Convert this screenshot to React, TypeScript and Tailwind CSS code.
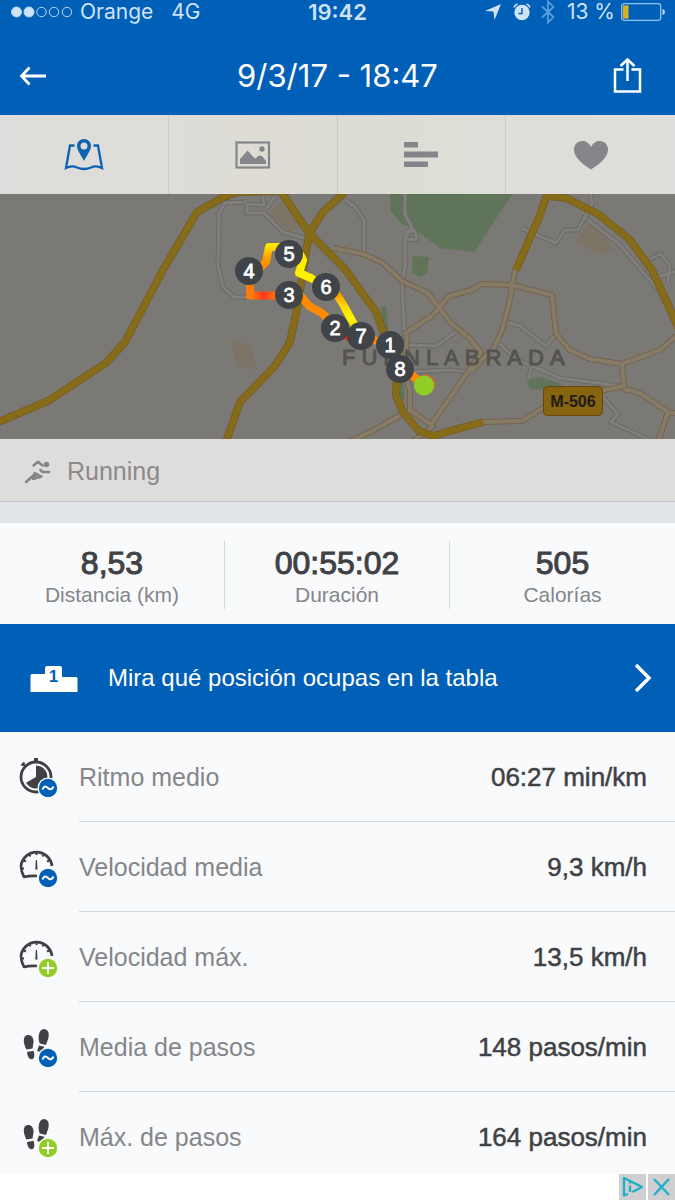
import type { ReactNode } from 'react';

// Splits on the route, in the order they are stacked on the map
const PINS = [
  { label: '5', x: 289, y: 60 },
  { label: '4', x: 249, y: 77 },
  { label: '3', x: 289, y: 101 },
  { label: '6', x: 326, y: 93 },
  { label: '2', x: 335, y: 134 },
  { label: '7', x: 361, y: 142 },
  { label: '1', x: 390, y: 151 },
  { label: '8', x: 400, y: 175 },
];

const MAJOR_ROADS = [
  'M-4 229 L48 207 L106 169 L125 148 L163 76 L197 18 L222 4 L236 -2 L290 -3',
  'M281 -2 L309 39 L345 75 L376 118 L388 150 L397 180 L396 201 L403 218 L419 237 L433 242 L450 237 L483 228',
  'M345 -2 L323 18 L309 40 L297 115 L290 148 L275 172 L240 208 L226 248',
  'M548 -2 L540 21 L516 76',
  'M548 2 L566 4 L598 20 L629 45 L652 76 L670 115 L680 138',
];

const MINOR_ROADS = [
  'M333 54 L363 60 L383 69 L402 87 L428 99 L450 128 L470 145 L481 158 L470 175 L430 232',
  'M404 140 L432 122 L449 102 L472 96 L481 90 L512 91 L552 101 L556 140 L570 156 L590 165 L622 170 L660 156 L680 139',
  'M515 76 L509 110 L502 136 L494 154 L470 178',
  'M622 170 L624 192 L600 197 L560 205 L538 217 L522 227 L483 228',
  'M624 195 L640 199 L668 218 L680 220',
  'M668 218 L658 248',
  'M349 248 L372 237 L410 216 L410 197 L405 180 L407 140',
  'M410 216 L433 232 L412 248',
];

const STREETS = [
  'M262 -2 L264 11 L247 10 L247 19 L264 19 L283 38 L304 44',
  'M247 8 L225 9 L219 20 L218 72 L223 93 L234 103 L249 103',
  'M278 -2 L267 14',
  'M345 6 L355 13 L364 26 L364 64',
  'M405 -2 L405 20 L412 34 L405 44 L405 72 L402 90 L405 150',
  'M405 38 L415 37 L417 45 L404 46',
  'M407 151 L436 152 L456 138',
  'M410 178 L450 176 L470 178',
  'M506 128 L520 132 L546 152 L556 140',
  'M500 150 L515 165 L560 184 L620 192',
  'M523 35 L539 42 L556 49 L565 36 L578 36 L585 23 L592 10 L590 -2',
  'M587 25 L620 51 L660 98 L680 138',
  'M650 65 L661 60 L670 72 L668 88 M661 82 L680 76',
  'M604 204 L618 220 L611 228 L650 246',
  'M529 184 L532 170',
];

type BadgeKind = 'avg' | 'max';

function Badge({ kind }: { kind: BadgeKind }) {
  return (
    <>
      <circle cx="29" cy="31" r="10.5" fill="#f9fafc" />
      <circle cx="29" cy="31" r="9.2" fill={kind === 'avg' ? '#0060b6' : '#8fce24'} />
      <path
        d={kind === 'avg' ? 'M23.5 32.5 C25 28.5 27 29 29 31 S33 33 34.5 29.5' : 'M29 25 V37 M23 31 H35'}
        fill="none"
        stroke="#fff"
        strokeWidth="2"
      />
    </>
  );
}

function StatIcon({ children, kind }: { children: ReactNode; kind: BadgeKind }) {
  return (
    <svg className="h-10 w-10 shrink-0" viewBox="0 0 40 40" aria-hidden="true">
      {children}
      <Badge kind={kind} />
    </svg>
  );
}

const stopwatch = (
  <>
    <circle cx="17" cy="20" r="15" fill="none" stroke="#3f4144" strokeWidth="2.8" />
    <path d="M17 8.5 A11.5 11.5 0 1 1 7 25.8 L17 20 Z" fill="#3f4144" />
    <path d="M15 1 H19 V5 H15 Z" fill="#3f4144" />
    <path d="M2.5 8.5 L5.5 5.5 M4 7 L7 10" stroke="#3f4144" strokeWidth="2.2" />
  </>
);

const gauge = (
  <>
    <path
      d="M33 19 A15.6 15.6 0 0 0 2 19 Q2 24 5 30 Q11 28.500 18 29"
      fill="none"
      stroke="#3f4144"
      strokeWidth="2.7"
      strokeLinejoin="round"
    />
    <path
      d="M17.500 4 V8 M9.500 6.500 L11.500 9.500 M25.500 6.500 L23.500 9.500 M4 13 L7 14.500 M31 13 L28 14.500 M2 21.500 H5"
      stroke="#3f4144"
      strokeWidth="2"
    />
    <path d="M16.800 13 H18 L18.500 22.500 H16.300 Z" fill="#3f4144" />
  </>
);

const footsteps = (
  <g fill="#3f4144">
    <path d="M8.5 8 C13 7 15.5 12.500 14.300 16.500 L13.500 21.500 L7.500 22.500 C5 18 2.500 9.500 8.500 8 Z" />
    <path d="M8 25 L14.500 23.700 C15.500 27 16 31 13.500 32 C10.500 33 8.500 30 8 25 Z" />
    <path d="M25 2 C31 2.300 30.500 10 28 15 L27 18 L20.800 16.500 C18.500 11 19.500 2.300 25 2 Z" />
    <path d="M20 18.500 L25.500 19.800 L22 25 L18 24 Z" />
  </g>
);

const STATS: { label: string; value: string; kind: BadgeKind; icon: ReactNode }[] = [
  { label: 'Ritmo medio', value: '06:27 min/km', kind: 'avg', icon: stopwatch },
  { label: 'Velocidad media', value: '9,3 km/h', kind: 'avg', icon: gauge },
  { label: 'Velocidad máx.', value: '13,5 km/h', kind: 'max', icon: gauge },
  { label: 'Media de pasos', value: '148 pasos/min', kind: 'avg', icon: footsteps },
  { label: 'Máx. de pasos', value: '164 pasos/min', kind: 'max', icon: footsteps },
];

const TOTALS = [
  { value: '8,53', label: 'Distancia (km)' },
  { value: '00:55:02', label: 'Duración' },
  { value: '505', label: 'Calorías' },
];

const TABS = [
  {
    label: 'Mapa',
    icon: (
      <svg className="h-8 w-10" viewBox="0 0 40 32" fill="none">
        <path
          d="M10.5 6.5 H6 L2 29 Q8 26 13 28.500 Q20 31.500 27 28.500 Q32 26 38 29 L34 6.500 H29.500"
          stroke="#0d62b4"
          strokeWidth="2.3"
        />
        <path
          d="M20 0 C16 0 13 3 13 7 C13 11 17 16 20 22 C23 16 27 11 27 7 C27 3 24 0 20 0 Z M20 3.5 A3.5 3.5 0 1 1 20 10.500 A3.5 3.5 0 1 1 20 3.500 Z"
          fill="#0d62b4"
          fillRule="evenodd"
        />
      </svg>
    ),
  },
  {
    label: 'Fotos',
    icon: (
      <svg className="h-7 w-9" viewBox="0 0 36 28">
        <rect x="1.500" y="1.500" width="32.500" height="25" fill="none" stroke="#858689" strokeWidth="2.200" />
        <path d="M5 23 V18 L12.500 9.500 L18 15.500 L20 17.500 L24 14.500 L27 15 L31 20 V23 Z" fill="#858689" />
        <circle cx="27" cy="8" r="2.700" fill="#858689" />
      </svg>
    ),
  },
  {
    label: 'Parciales',
    icon: (
      <svg className="h-[25px] w-9" viewBox="0 0 36 25" fill="#858689">
        <path d="M1 0 H15 V5.500 H1 Z M1 9.500 H35 V15.500 H1 Z M1 19.500 H25 V25 H1 Z" />
      </svg>
    ),
  },
  {
    label: 'Pulso',
    icon: (
      <svg className="h-[30px] w-9" viewBox="0 0 36 30" fill="#858689">
        <path d="M18 29.500 C13 26 1 19 1 9.500 C1 1 13 -3 18 7 C23 -3 35 1 35 9.500 C35 19 23 26 18 29.500 Z" />
      </svg>
    ),
  },
];

function StatusBar() {
  return (
    <div className="grid h-6 grid-cols-[1fr_auto_1fr] items-center px-2.5 font-[Inter,sans-serif] text-[21px] leading-6 text-[#cfe3f8]">
      <div className="flex items-center">
        <svg className="h-3 w-16" viewBox="0 0 64 12" fill="none" stroke="#b8d6f4">
          <circle cx="6.500" cy="6" r="5" fill="#cfe3f8" />
          <circle cx="19" cy="6" r="5" fill="#cfe3f8" />
          <circle cx="31.500" cy="6" r="4.700" />
          <circle cx="44" cy="6" r="4.700" />
          <circle cx="57" cy="6" r="4.700" />
        </svg>
        <span className="ml-1.5">Orange</span>
        <span className="ml-[18px]">4G</span>
      </div>
      <span className="text-[22px] font-semibold">19:42</span>
      <div className="flex items-center justify-end">
        <svg className="mr-3 h-4 w-4" viewBox="0 0 16 16" fill="#cfe3f8">
          <path d="M16 0 L9.500 16 L8.500 7.500 L0 7 Z" />
        </svg>
        <svg className="mr-2.5 h-[18px] w-[18px]" viewBox="0 0 18 18" fill="none">
          <circle cx="9" cy="9.500" r="7.700" fill="#cfe3f8" />
          <path d="M1 4.500 A6 6 0 0 1 4.500 1 M13.500 1 A6 6 0 0 1 17 4.500" stroke="#cfe3f8" strokeWidth="1.600" />
          <path d="M9 5 V10.500 H5.500" stroke="#0060b7" strokeWidth="1.400" />
        </svg>
        <svg className="mr-3 h-6 w-[14px]" viewBox="0 0 14 24" fill="none" stroke="#5d9fdd" strokeWidth="1.700">
          <path d="M1 6.500 L12.500 17 L7 22.500 V1.500 L12.500 7 L1 17.500" />
        </svg>
        <span>13 %</span>
        <svg className="ml-1.5 h-[18px] w-11" viewBox="0 0 44 18" fill="none">
          <rect x="0.700" y="0.700" width="39" height="16.600" rx="2.500" stroke="#8fc0ec" strokeWidth="1.300" />
          <rect x="2" y="2.500" width="5.500" height="13" fill="#d9b11e" />
          <path d="M41.500 6 Q44 6.500 44 9 T41.500 12 Z" fill="#b8d6f4" />
        </svg>
      </div>
    </div>
  );
}

function RouteMap() {
  return (
    <svg
      className="block h-[245px] w-full bg-[#7b7975]"
      viewBox="0 0 675 245"
      preserveAspectRatio="xMidYMid slice"
      role="img"
      aria-label="Fuenlabrada"
    >
      <defs>
        <linearGradient id="west" x1="249" y1="0" x2="281" y2="0" gradientUnits="userSpaceOnUse">
          <stop offset="0" stopColor="#ff8a00" />
          <stop offset="0.45" stopColor="#ff3a1c" />
          <stop offset="1" stopColor="#ff8a00" />
        </linearGradient>
        <linearGradient id="north" x1="0" y1="52" x2="0" y2="75" gradientUnits="userSpaceOnUse">
          <stop offset="0" stopColor="#ffe600" />
          <stop offset="0.5" stopColor="#ff9c00" />
          <stop offset="1" stopColor="#ff8a00" />
        </linearGradient>
        <linearGradient id="east" x1="0" y1="100" x2="0" y2="136" gradientUnits="userSpaceOnUse">
          <stop offset="0" stopColor="#ff9c00" />
          <stop offset="0.4" stopColor="#ffe100" />
          <stop offset="0.7" stopColor="#fff600" />
          <stop offset="1" stopColor="#ffc000" />
        </linearGradient>
      </defs>

      {/* Parks and fields */}
      <g fill="#5f7458">
        <path d="M390 -1 H513 L474 58 L440 54 L420 39 L402 30 L391 18 Z" />
        <path d="M413 62 L429 63 L427 80 L419 83 L412 79 Z" />
        <path d="M381 113 L386 112 L389 140 L383 140 Z" />
        <path d="M526 187 L540 183 L562 190 L558 196 L530 195 Z" />
        <path d="M397 186 L403 182 L405 205 L400 206 Z" />
      </g>
      <g fill="#7c7466">
        <path d="M231 145 L250 151 L257 176 L237 172 Z" />
        <path d="M575 48 L590 29 L606 42 L614 56 L600 61 Z" />
        <path d="M268 20 L285 2 L302 34 L290 38 Z" />
      </g>

      <g fill="none" strokeLinejoin="round">
        {STREETS.map((d) => (
          <path key={d} d={d} stroke="#6b6a67" strokeWidth="5" />
        ))}
        {STREETS.map((d) => (
          <path key={d} d={d} stroke="#817f7c" strokeWidth="3" />
        ))}
        {MINOR_ROADS.map((d) => (
          <path key={d} d={d} stroke="#75644e" strokeWidth="6" />
        ))}
        {MINOR_ROADS.map((d) => (
          <path key={d} d={d} stroke="#857b67" strokeWidth="4" />
        ))}
        {MAJOR_ROADS.map((d) => (
          <path key={d} d={d} stroke="#77602c" strokeWidth="8" />
        ))}
        {MAJOR_ROADS.map((d) => (
          <path key={d} d={d} stroke="#866c18" strokeWidth="6" />
        ))}
      </g>

      <text x="342" y="171" className="font-['Liberation_Sans',sans-serif] text-[22px] tracking-[6px]" fill="#545351" stroke="#545351">
        FUENLABRADA
      </text>

      <rect x="543.500" y="192.500" width="59" height="29" rx="4" fill="#876410" stroke="#69460b" />
      <text
        x="573"
        y="213"
        textAnchor="middle"
        className="font-['Liberation_Sans',sans-serif] text-[16px] font-bold"
        fill="#1f1c14"
      >
        M-506
      </text>

      {/* Recorded track, coloured by pace */}
      <g fill="none" strokeWidth="8" strokeLinejoin="round">
        <path d="M424 192 L400 170 L390 151 L361 142" stroke="#ff8a00" />
        <path d="M335 134 L361 151" stroke="#f51f1f" />
        <path d="M340 138 L322 119 L309 112 L300 101 L289 101" stroke="#ff8a00" />
        <path d="M281 101.500 H249.500" stroke="url(#west)" />
        <path d="M250 105 V77" stroke="#ff7a0a" />
        <path d="M258 76 L266 68 L269 53 H282" stroke="url(#north)" />
        <path d="M300 60 L303 66 L299 79 L311 84 L320 90" stroke="#fff000" />
        <path d="M334 96 L344 112 L357 136" stroke="url(#east)" />
      </g>
      <circle cx="425.500" cy="190.500" r="10" fill="#c76a36" />
      <circle cx="424" cy="191.500" r="10" fill="#8fce24" />

      {PINS.map((pin) => (
        <g key={pin.label}>
          <circle cx={pin.x} cy={pin.y} r="14" fill="#404448" />
          <text
            x={pin.x}
            y={pin.y + 7}
            textAnchor="middle"
            className="font-['Liberation_Sans',sans-serif] text-[20px]"
            fill="#fff"
            stroke="#fff"
            strokeWidth="0.8"
          >
            {pin.label}
          </text>
        </g>
      ))}
    </svg>
  );
}

export default function App() {
  return (
    <div className="min-h-screen bg-[#f9fafc] font-['Liberation_Sans',Arial,sans-serif] text-[#3f4144]">
      <header className="bg-[#0060b7]">
        <StatusBar />
        <div className="grid h-[91px] grid-cols-[1fr_auto_1fr] items-center px-[18px] pt-3 text-white">
          <button type="button" aria-label="Atrás" className="justify-self-start">
            <svg className="h-7 w-8" viewBox="0 0 32 28" fill="none" stroke="currentColor" strokeWidth="2.8">
              <path d="M28 14 H4 M11.500 5.500 L3.500 14 L11.500 22.500" />
            </svg>
          </button>
          <h1 className="font-[Inter,sans-serif] text-[31px] leading-10">9/3/17 - 18:47</h1>
          <button type="button" aria-label="Compartir" className="justify-self-end">
            <svg className="mr-3.5 h-9 w-8" viewBox="0 0 32 36" fill="none" stroke="currentColor" strokeWidth="2.5">
              <path d="M12.500 11.500 H4 V33.500 H29 V11.500 H20.500" />
              <path d="M16.500 23 V1.500 M9.500 8 L16.500 1.500 L23.500 8" />
            </svg>
          </button>
        </div>
      </header>

      <nav className="grid h-[79px] grid-cols-4 bg-linear-to-r from-[#dfdddb] via-[#dddcd3] to-[#dfdedc]">
        {TABS.map((tab, i) => (
          <button
            key={tab.label}
            type="button"
            aria-label={tab.label}
            className={`flex items-center justify-center ${i < TABS.length - 1 ? 'border-r border-[#cccbc8]' : ''}`}
          >
            {tab.icon}
          </button>
        ))}
      </nav>

      <RouteMap />

      <div className="flex h-[63px] items-center border-b border-[#c5c6c7] bg-[#dfdddb] px-6 pt-1 text-[25px] text-[#8b8a8b]">
        <svg className="mr-4 h-6 w-[27px]" viewBox="0 0 27 24" fill="none" stroke="#858689" strokeWidth="2.500">
          <path
            d="M9.500 5.500 L14 1.800 L18.500 5.500 M2 22 L11 14 M10.500 13 L17.500 16.500 L9 19 M13 14 L9 18 M16.500 10 L18.500 12 H25"
            strokeLinecap="round"
            strokeLinejoin="round"
          />
          <circle cx="22.500" cy="4.500" r="2.800" fill="#858689" stroke="none" />
        </svg>
        <span>Running</span>
      </div>

      <div className="h-[21px] bg-[#e1e4e8]" />

      <dl className="grid h-[101px] grid-cols-3 py-[18px] text-center">
        {TOTALS.map((total, i) => (
          <div
            key={total.label}
            className={`flex flex-col-reverse justify-center pt-1 ${i < TOTALS.length - 1 ? 'border-r border-[#d5d8db]' : ''}`}
          >
            <dt className="text-[21px] leading-7 text-[#858689]">{total.label}</dt>
            <dd className="text-[32px] leading-9 [-webkit-text-stroke:1px]">{total.value}</dd>
          </div>
        ))}
      </dl>

      <a href="#tabla" className="flex h-[108px] items-center bg-[#0060b7] pr-[22px] pl-[30px] text-white">
        <svg className="h-7 w-12" viewBox="0 0 48 28">
          <path
            d="M2 10 H15 V4 Q15 2 17 2 H30 Q32 2 32 4 V13 H46 Q47.500 13 47.500 14.500 V28 H0.500 V11.500 Q0.500 10 2 10 Z"
            fill="#fff"
          />
          <text x="23.500" y="18" textAnchor="middle" className="text-[17px] font-bold" fill="#0060b7">
            1
          </text>
        </svg>
        <span className="ml-[30px] flex-1 text-[24px]">Mira qué posición ocupas en la tabla</span>
        <svg className="h-8 w-5" viewBox="0 0 20 32" fill="none" stroke="currentColor" strokeWidth="3.500">
          <path d="M3 3 L16 16 L3 29" />
        </svg>
      </a>

      <dl>
        {STATS.map((stat, i) => (
          <div key={stat.label} className="flex h-[90px] items-center pl-[19px]">
            {/* dt holds the label only, the icon is decorative */}
            <StatIcon kind={stat.kind}>{stat.icon}</StatIcon>
            <div
              className={`ml-5 flex h-full flex-1 items-center justify-between border-b pt-0.5 pr-7 ${
                i < STATS.length - 1 ? 'border-[#d5d8db]' : 'border-transparent'
              }`}
            >
              <dt className="text-[25px] text-[#858689]">{stat.label}</dt>
              <dd className="text-[26px] [-webkit-text-stroke:0.5px]">{stat.value}</dd>
            </div>
          </div>
        ))}
      </dl>

      {/* Ad strip stays on top of the list */}
      <div className="fixed inset-x-0 bottom-0 flex h-[26px] justify-end gap-0.5 bg-white">
        <button type="button" aria-label="Información del anuncio" className="bg-[#cfcfd1]">
          <svg className="h-[26px] w-[27px]" viewBox="0 0 27 26" fill="none" stroke="#1fb0c8" strokeWidth="2.400">
            <path d="M9 20 L5 21.500 V4 L23 13 L13.500 18" strokeLinejoin="round" />
            <path d="M11 11.500 V18 M11 7.500 V9.500" />
          </svg>
        </button>
        <button type="button" aria-label="Cerrar anuncio" className="bg-[#cfcfd1]">
          <svg className="h-[26px] w-[27px]" viewBox="0 0 27 26" fill="none" stroke="#1fb0c8" strokeWidth="2.400">
            <path d="M6 5 L21 21 M21 5 L6 21" />
          </svg>
        </button>
      </div>
    </div>
  );
}
